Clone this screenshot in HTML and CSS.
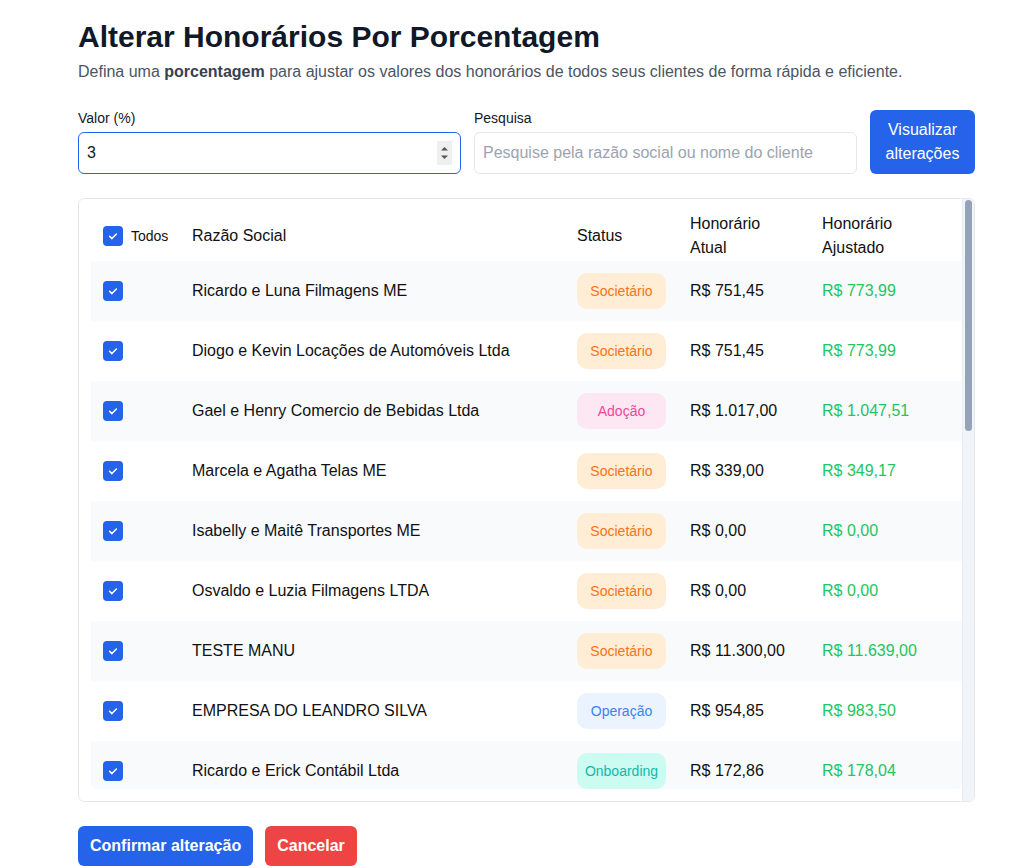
FILE: index.html
```html
<!DOCTYPE html>
<html lang="pt-BR">
<head>
<meta charset="utf-8">
<title>Alterar Honorários Por Porcentagem</title>
<link rel="stylesheet" href="styles.css">
</head>
<body>
<main class="page">
  <h1 class="title">Alterar Honorários Por Porcentagem</h1>
  <p class="subtitle">Defina uma <strong>porcentagem</strong> para ajustar os valores dos honorários de todos seus clientes de forma rápida e eficiente.</p>

  <div class="form-row">
    <label class="field">
      <span class="label">Valor (%)</span>
      <span class="input-wrap">
        <input class="input input-active" type="number" value="3" autofocus>
        <span class="spin" aria-hidden="true"><svg viewBox="0 0 15 24" width="15" height="24"><path d="M4 9.5L7.5 6 11 9.5z" fill="#555"/><path d="M4 14.5L7.5 18 11 14.5z" fill="#555"/></svg></span>
      </span>
    </label>
    <label class="field">
      <span class="label">Pesquisa</span>
      <input class="input" type="text" placeholder="Pesquise pela razão social ou nome do cliente">
    </label>
    <button class="btn btn-primary btn-preview" type="button">Visualizar alterações</button>
  </div>

  <div class="table-box">
    <div class="table-clip">
      <table class="table">
        <colgroup>
          <col class="c-check"><col class="c-name"><col class="c-status"><col class="c-cur"><col class="c-adj">
        </colgroup>
        <thead>
          <tr>
            <th><span class="check-all"><span class="checkbox"><svg viewBox="0 0 20 20" width="20" height="20"><path d="M6.6 10.3l2.3 2.3 4.5-4.6" fill="none" stroke="#fff" stroke-width="1.5" stroke-linecap="round" stroke-linejoin="round"/></svg></span><span class="todos">Todos</span></span></th>
            <th>Razão Social</th>
            <th>Status</th>
            <th>Honorário Atual</th>
            <th>Honorário Ajustado</th>
          </tr>
        </thead>
        <tbody>
          <tr>
            <td><span class="checkbox"><svg viewBox="0 0 20 20" width="20" height="20"><path d="M6.6 10.3l2.3 2.3 4.5-4.6" fill="none" stroke="#fff" stroke-width="1.5" stroke-linecap="round" stroke-linejoin="round"/></svg></span></td>
            <td>Ricardo e Luna Filmagens ME</td>
            <td><span class="badge badge-soc">Societário</span></td>
            <td>R$ 751,45</td>
            <td class="adj">R$ 773,99</td>
          </tr>
          <tr>
            <td><span class="checkbox"><svg viewBox="0 0 20 20" width="20" height="20"><path d="M6.6 10.3l2.3 2.3 4.5-4.6" fill="none" stroke="#fff" stroke-width="1.5" stroke-linecap="round" stroke-linejoin="round"/></svg></span></td>
            <td>Diogo e Kevin Locações de Automóveis Ltda</td>
            <td><span class="badge badge-soc">Societário</span></td>
            <td>R$ 751,45</td>
            <td class="adj">R$ 773,99</td>
          </tr>
          <tr>
            <td><span class="checkbox"><svg viewBox="0 0 20 20" width="20" height="20"><path d="M6.6 10.3l2.3 2.3 4.5-4.6" fill="none" stroke="#fff" stroke-width="1.5" stroke-linecap="round" stroke-linejoin="round"/></svg></span></td>
            <td>Gael e Henry Comercio de Bebidas Ltda</td>
            <td><span class="badge badge-ado">Adoção</span></td>
            <td>R$ 1.017,00</td>
            <td class="adj">R$ 1.047,51</td>
          </tr>
          <tr>
            <td><span class="checkbox"><svg viewBox="0 0 20 20" width="20" height="20"><path d="M6.6 10.3l2.3 2.3 4.5-4.6" fill="none" stroke="#fff" stroke-width="1.5" stroke-linecap="round" stroke-linejoin="round"/></svg></span></td>
            <td>Marcela e Agatha Telas ME</td>
            <td><span class="badge badge-soc">Societário</span></td>
            <td>R$ 339,00</td>
            <td class="adj">R$ 349,17</td>
          </tr>
          <tr>
            <td><span class="checkbox"><svg viewBox="0 0 20 20" width="20" height="20"><path d="M6.6 10.3l2.3 2.3 4.5-4.6" fill="none" stroke="#fff" stroke-width="1.5" stroke-linecap="round" stroke-linejoin="round"/></svg></span></td>
            <td>Isabelly e Maitê Transportes ME</td>
            <td><span class="badge badge-soc">Societário</span></td>
            <td>R$ 0,00</td>
            <td class="adj">R$ 0,00</td>
          </tr>
          <tr>
            <td><span class="checkbox"><svg viewBox="0 0 20 20" width="20" height="20"><path d="M6.6 10.3l2.3 2.3 4.5-4.6" fill="none" stroke="#fff" stroke-width="1.5" stroke-linecap="round" stroke-linejoin="round"/></svg></span></td>
            <td>Osvaldo e Luzia Filmagens LTDA</td>
            <td><span class="badge badge-soc">Societário</span></td>
            <td>R$ 0,00</td>
            <td class="adj">R$ 0,00</td>
          </tr>
          <tr>
            <td><span class="checkbox"><svg viewBox="0 0 20 20" width="20" height="20"><path d="M6.6 10.3l2.3 2.3 4.5-4.6" fill="none" stroke="#fff" stroke-width="1.5" stroke-linecap="round" stroke-linejoin="round"/></svg></span></td>
            <td>TESTE MANU</td>
            <td><span class="badge badge-soc">Societário</span></td>
            <td>R$ 11.300,00</td>
            <td class="adj">R$ 11.639,00</td>
          </tr>
          <tr>
            <td><span class="checkbox"><svg viewBox="0 0 20 20" width="20" height="20"><path d="M6.6 10.3l2.3 2.3 4.5-4.6" fill="none" stroke="#fff" stroke-width="1.5" stroke-linecap="round" stroke-linejoin="round"/></svg></span></td>
            <td>EMPRESA DO LEANDRO SILVA</td>
            <td><span class="badge badge-op">Operação</span></td>
            <td>R$ 954,85</td>
            <td class="adj">R$ 983,50</td>
          </tr>
          <tr>
            <td><span class="checkbox"><svg viewBox="0 0 20 20" width="20" height="20"><path d="M6.6 10.3l2.3 2.3 4.5-4.6" fill="none" stroke="#fff" stroke-width="1.5" stroke-linecap="round" stroke-linejoin="round"/></svg></span></td>
            <td>Ricardo e Erick Contábil Ltda</td>
            <td><span class="badge badge-onb">Onboarding</span></td>
            <td>R$ 172,86</td>
            <td class="adj">R$ 178,04</td>
          </tr>
        </tbody>
      </table>
    </div>
    <div class="scrollbar"><div class="scroll-thumb"></div></div>
  </div>

  <div class="actions">
    <button class="btn btn-primary btn-bold" type="button">Confirmar alteração</button>
    <button class="btn btn-danger btn-bold" type="button">Cancelar</button>
  </div>
</main>
</body>
</html>
```

FILE: styles.css
```css
* { box-sizing: border-box; }

body {
  margin: 0;
  background: #fff;
  font-family: "Liberation Sans", Arial, sans-serif;
  color: #111827;
}

.page {
  width: 897px;
  margin-left: 78px;
  padding-top: 19px;
}

.title {
  margin: 0;
  font-size: 30px;
  line-height: 36px;
  font-weight: 700;
  color: #111827;
}

.subtitle {
  margin: 5px 0 0;
  font-size: 16px;
  line-height: 24px;
  color: #4b5563;
}
.subtitle strong { color: #374151; }

.form-row {
  display: flex;
  align-items: flex-end;
  gap: 13px;
  margin-top: 24px;
}

.field {
  flex: 1 1 0;
  display: flex;
  flex-direction: column;
  gap: 4px;
}

.label {
  font-size: 14px;
  line-height: 20px;
  color: #111827;
}

.input-wrap {
  position: relative;
  display: block;
}

.input {
  display: block;
  height: 42px;
  width: 100%;
  padding: 8px 8px;
  border: 1px solid #e5e7eb;
  border-radius: 6px;
  font-family: inherit;
  font-size: 16px;
  line-height: 24px;
  color: #111827;
  background: #fff;
  outline: none;
  caret-color: #111;
}
.input::placeholder { color: #9ca3af; }
.input-active { border-color: #2563eb; }
.input[type=number] { -moz-appearance: textfield; }
.input[type=number]::-webkit-inner-spin-button,
.input[type=number]::-webkit-outer-spin-button { -webkit-appearance: none; margin: 0; }

.spin {
  position: absolute;
  right: 9px;
  top: 9px;
  width: 15px;
  height: 24px;
  background: #efefef;
}
.spin svg { display: block; }

.btn {
  border: 0;
  border-radius: 6px;
  padding: 8px 12px;
  font-family: inherit;
  font-size: 16px;
  line-height: 24px;
  color: #fff;
  cursor: pointer;
}
.btn-primary { background: #2563eb; }
.btn-danger { background: #ef4444; }
.btn-bold { font-weight: 700; }
.btn-preview { flex: 0 0 105px; height: 64px; text-align: center; }

.table-box {
  display: flex;
  margin-top: 24px;
  height: 604px;
  border: 1px solid #e5e7eb;
  border-radius: 6px;
  overflow: hidden;
}

.table-clip {
  flex: 1 1 auto;
  min-width: 0;
  margin: 0 0 12px 12px;
  overflow: hidden;
  border-radius: 0 0 6px 6px;
}

.scrollbar {
  flex: 0 0 12px;
  background: #f1f5f9;
  border-left: 1px solid #e8edf3;
  padding: 1px 2px 0 2px;
}
.scroll-thumb {
  width: 7px;
  height: 231px;
  border-radius: 4px;
  background: #94a3b8;
}

.table {
  width: 100%;
  border-collapse: collapse;
  table-layout: fixed;
  font-size: 16px;
  line-height: 24px;
  color: #111;
}
.c-check { width: 89px; }
.c-name { width: 385px; }
.c-status { width: 113px; }
.c-cur { width: 132px; }
.c-adj { width: 152px; }

.table th {
  text-align: left;
  font-weight: 400;
  padding: 13px 12px 1px;
  vertical-align: middle;
}
.table td {
  padding: 12px;
  vertical-align: middle;
  white-space: nowrap;
}
.table tbody tr:nth-child(odd) { background: #f8fafc; }
.table td.adj { color: #22c55e; }

.check-all {
  display: flex;
  align-items: center;
  gap: 8px;
}
.todos { font-size: 14px; line-height: 20px; }

.checkbox {
  display: block;
  width: 20px;
  height: 20px;
  border-radius: 4px;
  background: #2563eb;
}
.checkbox svg { display: block; }

.badge {
  display: flex;
  align-items: center;
  justify-content: center;
  width: 89px;
  height: 36px;
  border-radius: 10px;
  font-size: 14px;
  line-height: 20px;
}
.badge-soc { background: #ffedd5; color: #f97316; }
.badge-ado { background: #fce7f3; color: #ec4899; }
.badge-op { background: #ebf3fe; color: #3b82f6; }
.badge-onb { background: #ccfbf1; color: #14b8a6; }

.actions {
  display: flex;
  gap: 12px;
  margin-top: 24px;
}
```
